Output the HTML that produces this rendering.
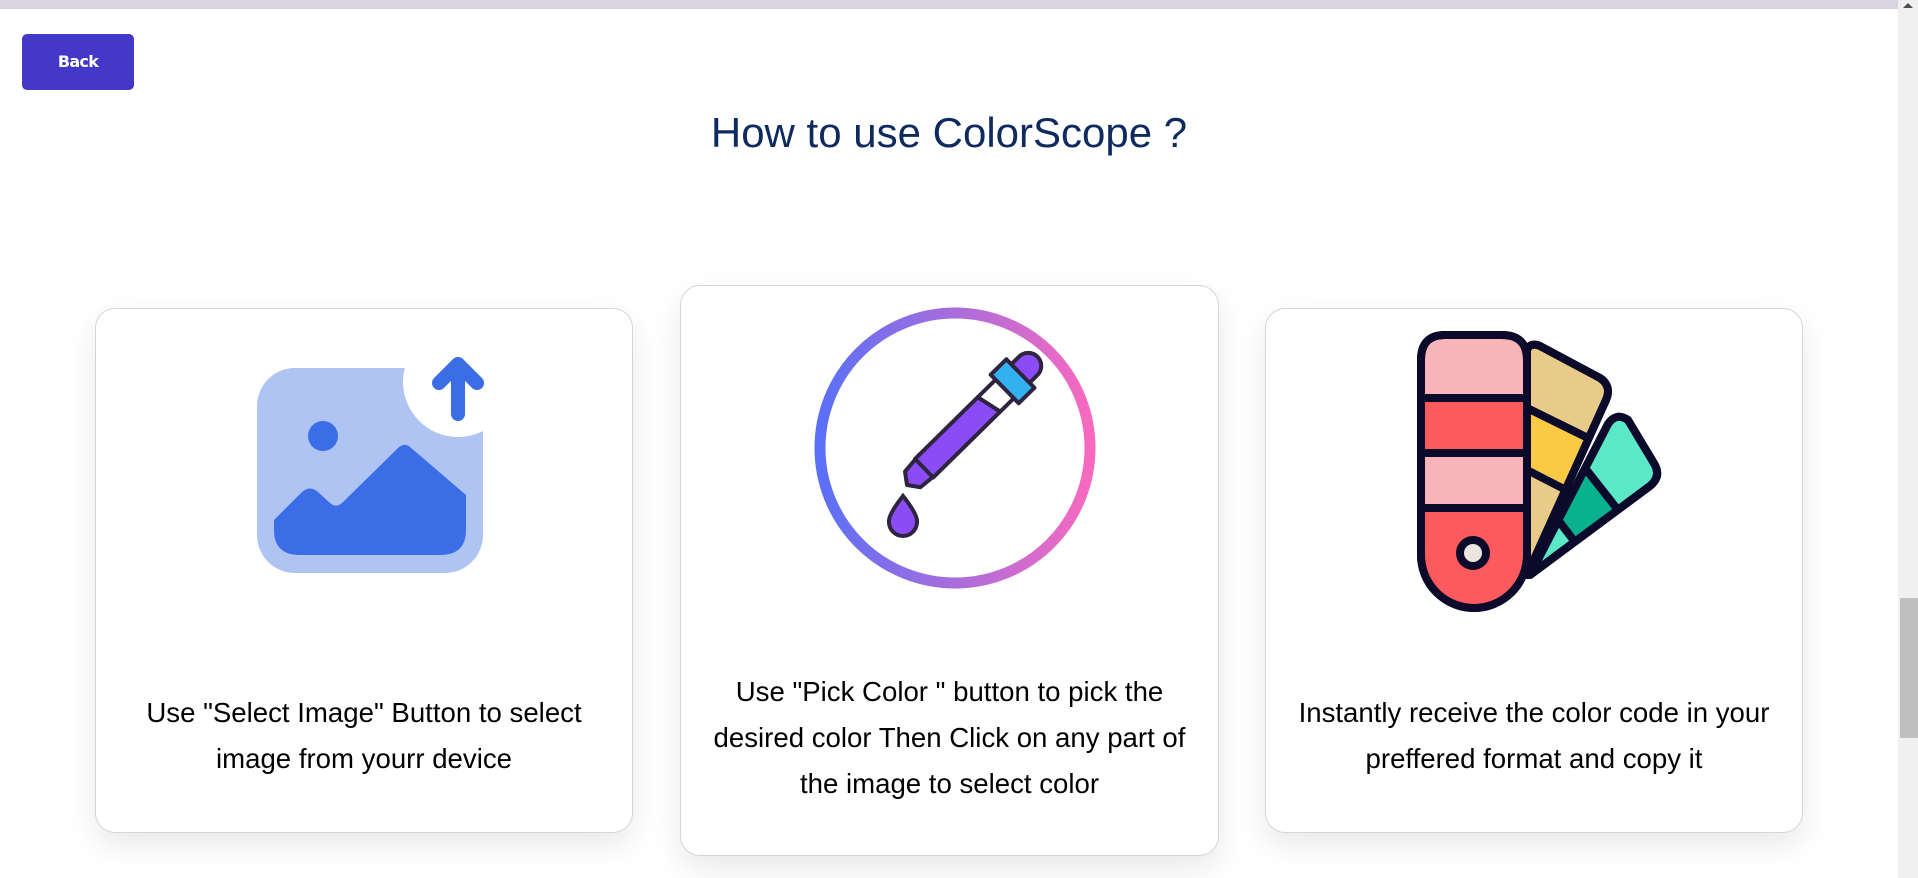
<!DOCTYPE html>
<html><head><meta charset="utf-8"><style>
html,body{margin:0;padding:0;width:1918px;height:878px;overflow:hidden;background:#fff;font-family:"Liberation Sans",Arial,sans-serif;position:relative}
.top{position:absolute;left:0;top:0;width:1898px;height:9px;background:#d9d4e0}
.sb{position:absolute;left:1898px;top:0;width:20px;height:878px;background:#f0f0f0}
.thumb{position:absolute;left:1900px;top:598px;width:18px;height:140px;background:#c0c0c0}
.arr{position:absolute;left:1903px;top:3px;width:0;height:0;border-left:5px solid transparent;border-right:5px solid transparent;border-bottom:5px solid #505050}
.back{position:absolute;left:22px;top:34px;width:112px;height:56px;background:#4338c8;border-radius:5px;color:#fff;font-weight:bold;font-size:16px;line-height:56px;text-align:center;font-family:"DejaVu Sans","Liberation Sans",sans-serif;letter-spacing:-0.7px}
h1{position:absolute;left:0;width:1898px;top:107px;margin:0;text-align:center;font-weight:normal;font-size:42px;color:#0f2a5f;line-height:52px}
.card{position:absolute;background:#fff;border:1px solid #d6d6d6;border-radius:20px;box-shadow:0 12px 30px rgba(0,0,0,0.09);box-sizing:border-box}
.t{position:absolute;text-align:center;font-size:27.6px;line-height:46px;color:#000;white-space:nowrap}
svg{position:absolute;left:0;top:0}
</style></head><body>
<div class="top"></div>
<div class="sb"></div><div class="thumb"></div><div class="arr"></div>
<div class="back">Back</div>
<h1>How to use ColorScope ?</h1>
<div class="card" style="left:95px;top:308px;width:538px;height:525px"></div>
<div class="card" style="left:680px;top:285px;width:539px;height:571px"></div>
<div class="card" style="left:1265px;top:308px;width:538px;height:525px"></div>
<div class="t" style="left:95px;width:538px;top:690px">Use "Select Image" Button to select<br>image from yourr device</div>
<div class="t" style="left:680px;width:539px;top:669px">Use "Pick Color " button to pick the<br>desired color Then Click on any part of<br>the image to select color</div>
<div class="t" style="left:1265px;width:538px;top:690px">Instantly receive the color code in your<br>preffered format and copy it</div>
<svg width="1918" height="878" viewBox="0 0 1918 878">
<defs>
<linearGradient id="g" x1="0" x2="1" y1="0" y2="0"><stop offset="0" stop-color="#5a70f6"/><stop offset="1" stop-color="#f86ac0"/></linearGradient>
</defs>
<rect x="257" y="368" width="226" height="205" rx="38" fill="#b0c4f4"/>
<circle cx="458" cy="382" r="55" fill="#fff"/>
<g stroke="#3b6ee6" stroke-width="14" stroke-linecap="round" stroke-linejoin="round" fill="none">
<path d="M458 414 V364 M439 383 L458 364 L477 383"/></g>
<circle cx="323" cy="436" r="15" fill="#3b6ee6"/>
<path d="M274 520 L302 492 Q310 485 318 492 L330 503 Q336 508 342 503 L398 448 Q404 442 410 447 L466 495 L466 530 Q466 555 440 555 L300 555 Q274 555 274 530 Z" fill="#3b6ee6"/>
<circle cx="955" cy="448" r="135" fill="none" stroke="url(#g)" stroke-width="11"/>
<g transform="translate(907,485) rotate(-44.5)" stroke="#2e2440" stroke-width="4" stroke-linejoin="round">
<path d="M0 0 L8 -11 L30 -13 L30 13 L8 11 Z" fill="#8b4cf6"/>
<path d="M24 -13 H112 L118 13 H24 Z" fill="#8b4cf6"/>
<path d="M112 -13 H138 V13 H118 Z" fill="#fff"/>
<path d="M158 -13 H170 A13 13 0 0 1 170 13 H158 Z" fill="#8b4cf6"/>
<rect x="137" y="-20" width="22" height="40" fill="#33b1ee"/>
</g>
<path d="M903 496 Q888 515 889 522 A14 14 0 0 0 917 522 Q918 515 903 496 Z" fill="#8b4cf6" stroke="#2e2440" stroke-width="4"/>
<g transform="translate(1380,320)" stroke="#0b0a2a" stroke-width="8" stroke-linejoin="round">
<path d="M150 255 L228 104 Q236 92 248 100 L275 145 Q281 157 270 166 Z" fill="#5ae8c7"/>
<path d="M205 148 L238 190 L195 222 L178 200 Z" fill="#07b28c" stroke="none"/>
<path d="M205 148 L238 190 M178 200 L195 222" fill="none"/>
<path d="M150 255 L228 104 Q236 92 248 100 L275 145 Q281 157 270 166 Z" fill="none"/>
<path d="M147 30 Q150 22 160 26 L220 58 Q232 66 226 80 L147 255 Z" fill="#e8cb88"/>
<path d="M147 90 L206 118 L186 165 L147 145 Z" fill="#fbca45" stroke="none"/>
<path d="M147 88 L208 118 M147 150 L186 170" fill="none"/>
<path d="M147 30 Q150 22 160 26 L220 58 Q232 66 226 80 L147 255 Z" fill="none"/>
<path d="M65 15 H122 Q147 15 147 40 V235 A53 53 0 0 1 41 235 V40 Q41 15 65 15 Z" fill="#f8b4b8"/>
<path d="M43 78 H145 V133 H43 Z" fill="#fd5a5e" stroke="none"/>
<path d="M43 188 H145 V235 A51 51 0 0 1 43 235 Z" fill="#fd5a5e" stroke="none"/>
<path d="M65 15 H122 Q147 15 147 40 V235 A53 53 0 0 1 41 235 V40 Q41 15 65 15 Z" fill="none"/>
<path d="M41 78 H147 M41 133 H147 M41 188 H147" fill="none"/>
<circle cx="93" cy="233" r="13" fill="#ebe5e0"/>
</g>
</svg>
</body></html>
